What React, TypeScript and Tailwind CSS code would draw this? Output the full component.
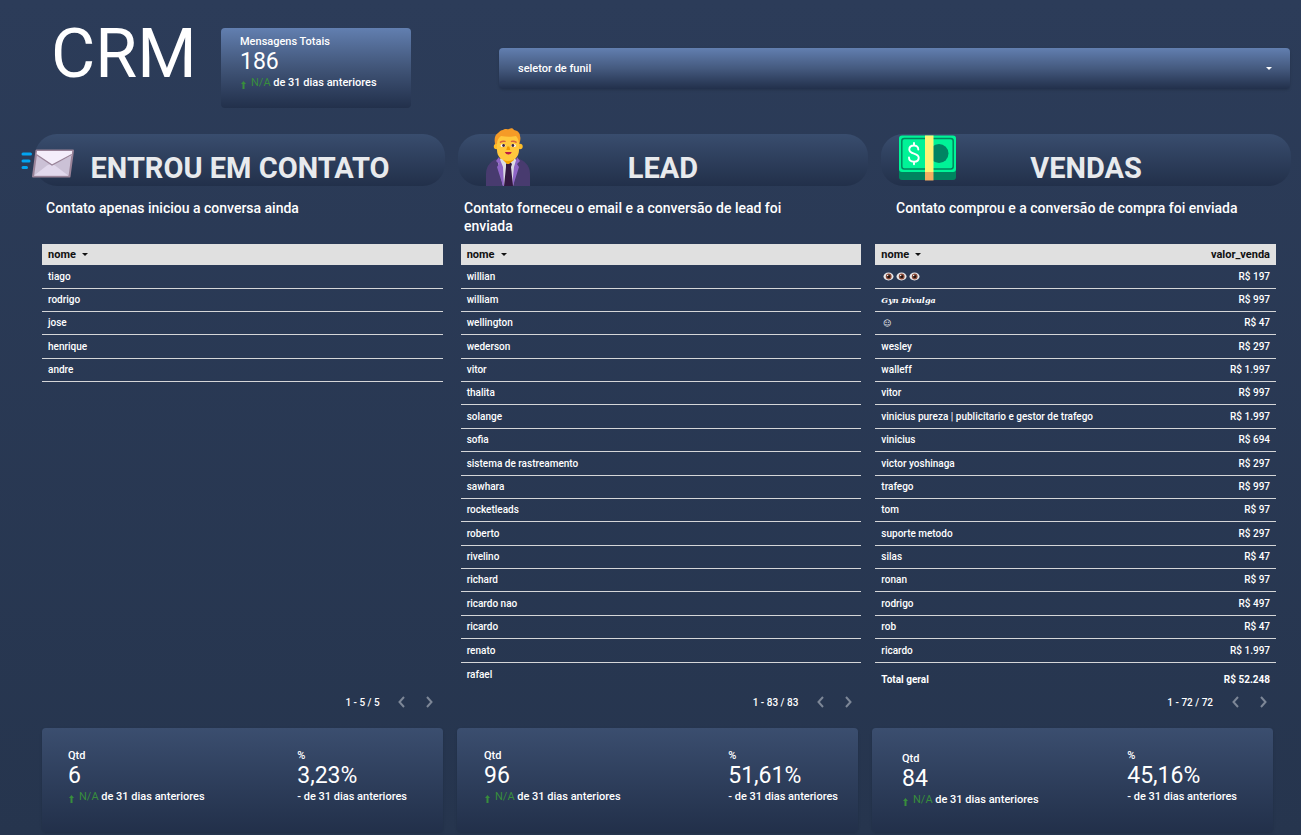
import type { ReactNode } from "react";
import { clsx } from "clsx";

type Row = { nome: ReactNode; valor?: string };

function Eye() {
  return (
    <svg viewBox="0 0 11 9" className="h-[9px] w-[11px]" aria-hidden>
      <ellipse cx="5.5" cy="4.5" rx="5" ry="3.9" fill="#e9e9ea" />
      <circle cx="5.7" cy="4.5" r="2.900" fill="#8a4a38" />
      <circle cx="5.7" cy="4.5" r="1.600" fill="#1e1210" />
      <circle cx="4.700" cy="3.500" r="0.7" fill="#fff" />
    </svg>
  );
}

const CONTATOS: Row[] = ["tiago", "rodrigo", "jose", "henrique", "andre"].map((nome) => ({ nome }));

const LEADS: Row[] = [
  "willian", "william", "wellington", "wederson", "vitor", "thalita",
  "solange", "sofia", "sistema de rastreamento", "sawhara", "rocketleads", "roberto",
  "rivelino", "richard", "ricardo nao", "ricardo", "renato", "rafael",
].map((nome) => ({ nome }));

const VENDAS: Row[] = [
  { nome: <span className="flex gap-[2px] pl-[2px]"><Eye /><Eye /><Eye /></span>, valor: "R$ 197" },
  { nome: <span className="font-['DejaVu_Serif',serif] text-[8px] font-bold italic">Gyn Divulga</span>, valor: "R$ 997" },
  { nome: <span className="pl-[2px] font-['DejaVu_Sans',sans-serif] text-[8px] font-bold">☺</span>, valor: "R$ 47" },
  { nome: "wesley", valor: "R$ 297" },
  { nome: "walleff", valor: "R$ 1.997" },
  { nome: "vitor", valor: "R$ 997" },
  { nome: "vinicius pureza | publicitario e gestor de trafego", valor: "R$ 1.997" },
  { nome: "vinicius", valor: "R$ 694" },
  { nome: "victor yoshinaga", valor: "R$ 297" },
  { nome: "trafego", valor: "R$ 997" },
  { nome: "tom", valor: "R$ 97" },
  { nome: "suporte metodo", valor: "R$ 297" },
  { nome: "silas", valor: "R$ 47" },
  { nome: "ronan", valor: "R$ 97" },
  { nome: "rodrigo", valor: "R$ 497" },
  { nome: "rob", valor: "R$ 47" },
  { nome: "ricardo", valor: "R$ 1.997" },
];

function EnvelopeIcon() {
  return (
    <svg viewBox="0 0 54 31" className="h-[31px] w-[54px]" aria-hidden>
      <g stroke="#03a4f0" strokeWidth="3" strokeLinecap="round">
        <path d="M2 6h7.500M2 13h6M2 19.500h3.500" />
      </g>
      <path d="M15.500 2.500 52 2.500 48.500 28.500H12z" fill="#cbc1d6" stroke="#998398" strokeWidth="2" strokeLinejoin="round" />
      <path d="M12.800 27.800 26 17.500q4.500-3 8 0l13.600 10.300z" fill="#e1d8ec" />
      <path d="M16 3h35.200l-.6 4.500L31 16.800 15.500 7z" fill="#f4eefb" />
      <path d="M15.300 6.500 31 17l19.800-10.500" fill="none" stroke="#998398" strokeWidth="1.200" />
    </svg>
  );
}

function ManIcon() {
  return (
    <svg viewBox="0 0 46 58" className="h-[58px] w-[46px]" aria-hidden>
      <path d="M1 58V46c0-9 6-14 13-16h17c8 2 14 7 14 16v12z" fill="#483b6f" />
      <path d="M16 30h14l2 4-4 24H18l-5-24z" fill="#dcdbe4" />
      <path d="M14 29l-3 4 3 3-2 3 6 19h1l-1-19z M32 29l3 4-3 3 2 3-6 19h-1l2-19z" fill="#8e65c5" />
      <path d="M21 36l2-2h2l2 2-1 3 2 19h-9l2-19z" fill="#32183f" />
      <path d="M18 26h11v6l-5 4h-2l-4-4z" fill="#f5a400" />
      <circle cx="11.500" cy="18.500" r="2.700" fill="#ffbd28" />
      <circle cx="35" cy="18.500" r="2.700" fill="#ffbd28" />
      <path d="M12 8h22v14c0 7-5 11-11 11s-11-4-11-11z" fill="#ffc83d" />
      <path d="M10 16c-1-6 0-9 3-11 2-2 3-3 5-3 2-2 4 0 6-1 2-1 4-1 5 1 5 1 6 4 6 6 1 3 0 5-.5 8H34c0-3-1-6-3-8-4 1-10 1-15 0-3 2-4 5-4 8z" fill="#f59b27" />
      <g fill="none" stroke="#d9643f" strokeWidth="1.500" strokeLinecap="round">
        <path d="M15.500 14.200q2-1.500 4.500-.8M26.500 13.400q2.500-.7 4.500.8" />
      </g>
      <ellipse cx="18" cy="17.500" rx="2.500" ry="1.500" fill="#fff" />
      <ellipse cx="28.500" cy="17.500" rx="2.500" ry="1.500" fill="#fff" />
      <circle cx="18.600" cy="17.500" r="1.400" fill="#3b2340" />
      <circle cx="27.900" cy="17.500" r="1.400" fill="#3b2340" />
      <path d="M22.300 18.500h2l1 3.500h-4z" fill="#f09a00" />
      <path d="M19.800 24h7q-1 2.500-3.500 2.500t-3.500-2.500z" fill="#bb1d45" />
    </svg>
  );
}

function MoneyIcon() {
  return (
    <svg viewBox="0 0 59 46" className="h-[46px] w-[59px]" aria-hidden>
      <path d="M1 30h57v12q0 3-3 3H4q-3 0-3-3z" fill="#00845f" />
      <rect x="1" y="0.500" width="57" height="36.500" rx="3" fill="#00f397" />
      <rect x="3.800" y="3.500" width="51.400" height="30.500" rx="2.500" fill="none" stroke="#008760" strokeWidth="1.500" />
      <circle cx="41" cy="18.500" r="9.500" fill="#008463" />
      <path d="M20.300 14.500c0-2.500-2-4-4.300-4-2.700 0-4.700 1.400-4.700 3.900 0 5.500 9.400 2.900 9.400 8.300 0 2.600-2.200 4-4.700 4-2.700 0-5-1.500-5-4.200M16 8v2.500M16 26.700v2.500" fill="none" stroke="#fff" strokeWidth="1.900" strokeLinecap="round" />
      <path d="M27 0.500h8.500V37H27z" fill="#fff478" />
      <path d="M27 37h8.500v8.500H27z" fill="#f3ad61" />
    </svg>
  );
}

const STAGES = [
  { title: "ENTROU EM CONTATO", icon: <EnvelopeIcon />, place: "-left-[14px] top-[14px]", text: "Contato apenas iniciou a conversa ainda", indent: "pl-[11px]" },
  { title: "LEAD", icon: <ManIcon />, place: "left-[27px] -top-[6px]", text: "Contato forneceu o email e a conversão de lead foi enviada", indent: "pl-[6px]" },
  { title: "VENDAS", icon: <MoneyIcon />, place: "left-[17px] top-px", text: "Contato comprou e a conversão de compra foi enviada", indent: "pl-[15px]" },
];

const CARDS = [
  { qtd: "6", pct: "3,23%", pad: "pl-[26px] pr-9", first: "" },
  { qtd: "96", pct: "51,61%", pad: "pl-[27px] pr-5", first: "" },
  { qtd: "84", pct: "45,16%", pad: "pl-[30px] pr-9", first: "pt-[3px]" },
];

function Metric({ label, value, trend, className }: { label: string; value: string; trend?: boolean; className?: string }) {
  return (
    <div className={className}>
      <p className="text-[11px] leading-4 font-medium">{label}</p>
      <p className="text-[23px] leading-6">{value}</p>
      <p className="text-[11px] leading-[18px] font-medium">
        {trend ? (
          <span className="font-normal text-[#388e3c]">
            <svg viewBox="0 0 7 8" className="mr-1 inline h-2 w-[7px] align-text-bottom" aria-hidden>
              <path d="M3.500 0 6 3H4.500V8H2.500V3H1z" fill="currentColor" />
            </svg>
            N/A{" "}
          </span>
        ) : (
          "- "
        )}
        de 31 dias anteriores
      </p>
    </div>
  );
}

function NameHeader() {
  return (
    <th scope="col" className="px-[6px] text-left font-bold">
      nome
      <svg viewBox="0 0 6 3" className="ml-[6px] inline h-[3px] w-[6px] align-middle" aria-hidden>
        <path d="M0 0h6L3 3z" fill="currentColor" />
      </svg>
    </th>
  );
}

function DataPanel({ rows, range, total, className }: { rows: Row[]; range: string; total?: string; className?: string }) {
  const lastLine = rows.length === 18;
  return (
    <section className={clsx("flex flex-1 flex-col", className)}>
      <table className="w-full border-separate border-spacing-0 text-[10px] leading-4 font-medium">
        <thead className="bg-[#e0e0e0] text-[11px] text-[#111]">
          <tr className="h-[21px]">
            <NameHeader />
            {total && <th scope="col" className="px-[6px] text-right font-bold">valor_venda</th>}
          </tr>
        </thead>
        <tbody className={clsx("[&_td]:border-b [&_td]:border-[#d5d6d8]", lastLine && "[&>tr:last-child>td]:border-b-0")}>
          {rows.map((r, i) => (
            <tr key={i} className="h-[23px] nth-[8n+1]:h-6 nth-[8n+4]:h-6 nth-[8n+7]:h-6">
              <td className="px-[6px]">{r.nome}</td>
              {total && <td className="px-[6px] text-right">{r.valor}</td>}
            </tr>
          ))}
        </tbody>
        {total && (
          <tfoot className="font-bold">
            <tr className="h-7">
              <td className="px-[6px] pt-[6px]">Total geral</td>
              <td className="px-[6px] pt-[6px] text-right">{total}</td>
            </tr>
          </tfoot>
        )}
      </table>
      <div className="mt-auto flex h-[22px] items-center justify-end gap-[2px] text-[10px] font-medium">
        <span className="mr-[7px]">{range}</span>
        <button type="button" aria-label="Anterior" className="flex h-[22px] w-[26px] items-center justify-center text-[#7d8797]">
          <svg viewBox="0 0 7 12" className="h-3 w-[7px]" fill="none" stroke="currentColor" strokeWidth="2" aria-hidden>
            <path d="M6 1 1.500 6 6 11" />
          </svg>
        </button>
        <button type="button" aria-label="Próxima" className="flex h-[22px] w-[26px] items-center justify-center text-[#7d8797]">
          <svg viewBox="0 0 7 12" className="h-3 w-[7px]" fill="none" stroke="currentColor" strokeWidth="2" aria-hidden>
            <path d="M1 1l4.500 5L1 11" />
          </svg>
        </button>
      </div>
    </section>
  );
}

export default function App() {
  return (
    <main className="min-h-screen bg-linear-to-b from-[#2c3c59] to-[#26354e] pb-[3px] font-[Roboto,sans-serif] text-white">
      <header className="flex items-start pt-7 pr-[11px] pl-[51px]">
        <h1 className="w-[170px] text-[68px] leading-[52px]">CRM</h1>
        <div className="h-20 w-[190px] rounded bg-linear-to-b from-[#627fb0] via-[#415578] to-[#22304b] pt-[6px] pl-[19px]">
          <Metric label="Mensagens Totais" value="186" trend />
        </div>
        <div className="relative mt-5 ml-[88px] flex-1">
          <select
            aria-label="seletor de funil"
            className="h-[41px] w-full appearance-none rounded bg-linear-to-b from-[#627fb0] via-[#455a7f] to-[#22304b] px-[19px] pt-px text-[11px] font-medium shadow-sm"
          >
            <option>seletor de funil</option>
          </select>
          <svg viewBox="0 0 6 3" className="pointer-events-none absolute top-[19px] right-[18px] h-[3px] w-[6px]" aria-hidden>
            <path d="M0 0h6L3 3z" fill="#fff" />
          </svg>
        </div>
      </header>

      <div className="mt-[26px] grid grid-cols-3 gap-[13px] pr-[10px] pl-[35px]">
        {STAGES.map((s) => (
          <div key={s.title}>
            <div className="relative h-[52px] rounded-[22px] bg-linear-to-b from-[#394d6e] to-[#22304a] pt-4 text-center">
              <span className={clsx("absolute", s.place)}>{s.icon}</span>
              <h2 className="text-[29px] leading-9 font-bold text-[#e8eaed]">{s.title}</h2>
            </div>
            <p className={clsx("mt-[13px] min-h-9 pr-10 text-[14px] leading-[18px] font-medium", s.indent)}>{s.text}</p>
          </div>
        ))}
      </div>

      <div className="mt-[9px] flex gap-[14px] pr-[25px] pl-[42px]">
        <DataPanel rows={CONTATOS} range="1 - 5 / 5" />
        <DataPanel rows={LEADS} range="1 - 83 / 83" className="ml-1" />
        <DataPanel rows={VENDAS} range="1 - 72 / 72" total="R$ 52.248" />
      </div>

      <div className="mt-[15px] grid grid-cols-3 gap-[14px] pr-7 pl-[42px]">
        {CARDS.map((c) => (
          <section
            key={c.qtd}
            className={clsx("flex h-[104px] justify-between rounded bg-linear-to-b from-[#3b4e6f] to-[#22304a] pt-5 shadow-sm", c.pad)}
          >
            <Metric label="Qtd" value={c.qtd} trend className={c.first} />
            <Metric label="%" value={c.pct} />
          </section>
        ))}
      </div>
    </main>
  );
}
